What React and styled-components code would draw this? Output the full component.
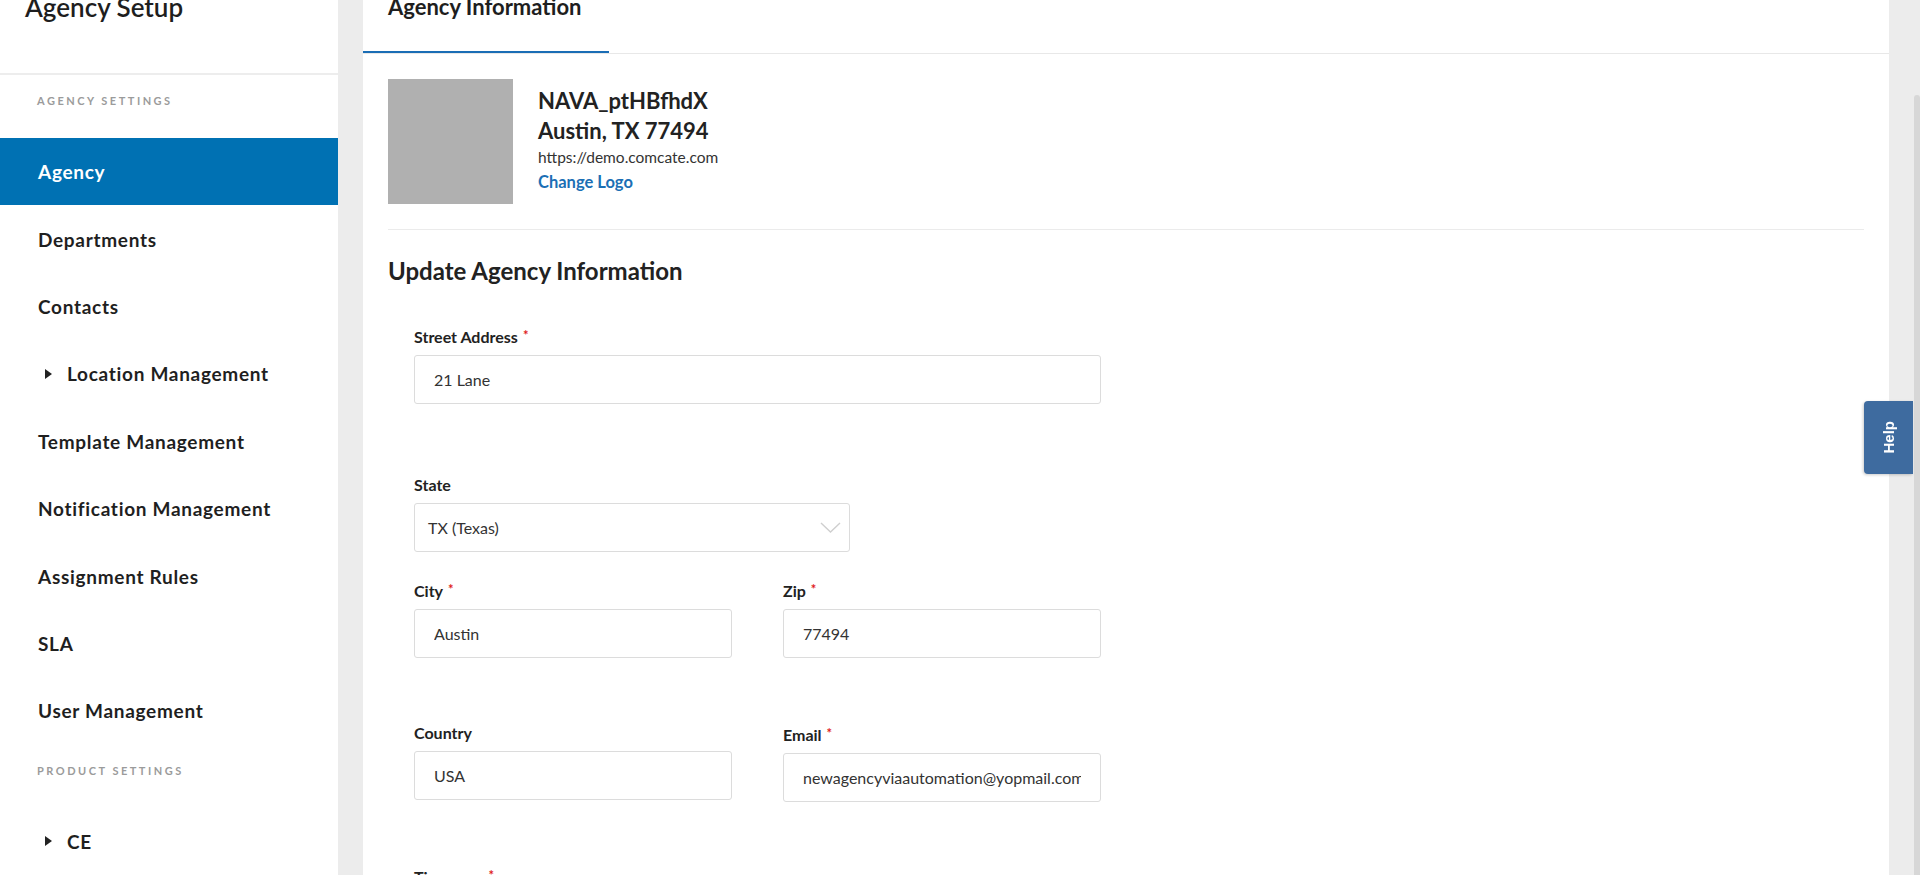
import styled, { createGlobalStyle } from 'styled-components';

const GlobalStyle = createGlobalStyle`
  html, body {
    margin: 0;
    padding: 0;
  }

  body {
    font-family: Lato, 'Liberation Sans', sans-serif;
    background: #ececec;
    color: #222;
    overflow: hidden;
  }

  * {
    box-sizing: border-box;
  }
`;

const Page = styled.div`
  display: flex;
  height: 875px;
  overflow: hidden;
  background: #ececec;
`;

const Sidebar = styled.aside`
  width: 338px;
  flex-shrink: 0;
  background: #fff;
  display: flex;
  flex-direction: column;
`;

const SidebarTitle = styled.h1`
  margin: 0;
  height: 75px;
  padding-left: 25px;
  border-bottom: 2px solid #ededed;
  font-size: 26px;
  font-weight: 600;
  line-height: 31px;
  color: #1e1e1e;

  span {
    display: block;
    margin-top: -8px;
  }
`;

const SectionLabel = styled.div`
  height: 63px;
  padding: 18px 0 0 37px;
  font-size: 11px;
  font-weight: 700;
  line-height: 16px;
  letter-spacing: 2.5px;
  color: #9b9b9b;
  text-transform: uppercase;
`;

const NavItem = styled.a`
  display: flex;
  align-items: center;
  gap: 15px;
  height: 67.4px;
  padding-left: ${p => (p.$caret ? '45px' : '38px')};
  font-size: 19px;
  font-weight: 700;
  letter-spacing: 0.7px;
  color: ${p => (p.$active ? '#fff' : '#1f1f1f')};
  background: ${p => (p.$active ? '#0071b3' : 'transparent')};
  text-decoration: none;
  cursor: pointer;
`;

const Content = styled.main`
  flex: 1;
  display: flex;
  padding: 0 25px;
  min-width: 0;
`;

const Panel = styled.section`
  flex: 1;
  background: #fff;
  min-width: 0;
`;

const TabBar = styled.div`
  display: flex;
  height: 54px;
  border-bottom: 1px solid #e8e8e8;
`;

const Tab = styled.div`
  width: 246px;
  height: 53px;
  padding-left: 25px;
  border-bottom: 2px solid #1a6db5;
  font-size: 22px;
  font-weight: 700;
  line-height: 24px;
  color: #1e1e1e;

  span {
    display: block;
    margin-top: -5px;
  }
`;

const PanelBody = styled.div`
  padding: 25px 25px 0;
`;

const ProfileRow = styled.div`
  display: flex;
  gap: 25px;
  padding-bottom: 25px;
  border-bottom: 1px solid #ebebeb;
`;

const LogoBox = styled.div`
  width: 125px;
  height: 125px;
  background: #b0b0b0;
  flex-shrink: 0;
`;

const ProfileInfo = styled.div`
  padding-top: 7px;
  display: flex;
  flex-direction: column;
`;

const AgencyLine = styled.div`
  font-size: 22px;
  font-weight: 700;
  line-height: 30px;
  color: #222;
`;

const UrlLine = styled.div`
  font-size: 15.5px;
  line-height: 22px;
  color: #333;
`;

const ChangeLogo = styled.a`
  margin-top: 3px;
  font-size: 16.5px;
  font-weight: 700;
  line-height: 22px;
  color: #1b6fb5;
  text-decoration: none;
  cursor: pointer;
`;

const SectionTitle = styled.h2`
  margin: 26px 0 0;
  font-size: 24px;
  font-weight: 700;
  line-height: 30px;
  color: #222;
`;

const Form = styled.form`
  margin-top: 39px;
  padding-left: 26px;
  width: 713px;
`;

const Row = styled.div`
  display: grid;
  grid-template-columns: 318px 318px;
  column-gap: 51px;
  margin-bottom: ${p => p.$space || 0}px;
`;

const Field = styled.div`
  width: ${p => p.$width || '100%'};
  margin-bottom: ${p => p.$space || 0}px;
`;

const Label = styled.label`
  display: block;
  margin-bottom: 8px;
  font-size: 16px;
  font-weight: 700;
  line-height: 20px;
  color: #222;
`;

const Required = styled.span`
  margin-left: 5px;
  color: #e01b1b;
  font-size: 13px;
  vertical-align: 3px;
`;

const TextInput = styled.input`
  display: block;
  width: 100%;
  height: 49px;
  padding: 0 19px;
  border: 1px solid #dcdcdc;
  border-radius: 3px;
  font-family: Lato, 'Liberation Sans', sans-serif;
  font-size: 16px;
  color: #333;
  background: #fff;
  outline: none;
`;

const SelectBox = styled.div`
  display: flex;
  align-items: center;
  justify-content: space-between;
  height: 49px;
  padding: 0 8px 0 13px;
  border: 1px solid #dcdcdc;
  border-radius: 3px;
  font-size: 16px;
  color: #333;
`;

const HelpTab = styled.button`
  position: fixed;
  top: 401px;
  right: 7px;
  width: 49px;
  height: 73px;
  border: none;
  border-radius: 4px 0 0 4px;
  background: #3e6b9f;
  box-shadow: -1px 1px 3px rgba(0, 0, 0, 0.2);
  color: #fff;
  font-family: 'Liberation Sans', Arial, sans-serif;
  font-size: 15px;
  font-weight: 700;
  display: flex;
  align-items: center;
  justify-content: center;
  padding: 0;

  span {
    writing-mode: vertical-rl;
    transform: rotate(180deg);
  }
`;

const ScrollTrack = styled.div`
  width: 6px;
  flex-shrink: 0;
  display: flex;
  flex-direction: column;
  padding-top: 95px;
  background: #ececec;
`;

const ScrollThumb = styled.div`
  flex: 1;
  border-radius: 3px 3px 0 0;
  background: #d7d7d7;
`;

const Caret = () => (
  <svg width='7' height='10' viewBox='0 0 7 10'>
    <path d='M0 0 L7 5 L0 10 Z' fill='#222' />
  </svg>
);

const Chevron = () => (
  <svg width='21' height='11' viewBox='0 0 21 11'>
    <polyline points='1,1 10.5,10 20,1' fill='none' stroke='#cfcfcf' strokeWidth='1.4' />
  </svg>
);

const agencyNav = [
  { label: 'Agency', active: true },
  { label: 'Departments' },
  { label: 'Contacts' },
  { label: 'Location Management', caret: true },
  { label: 'Template Management' },
  { label: 'Notification Management' },
  { label: 'Assignment Rules' },
  { label: 'SLA' },
  { label: 'User Management' },
];

const productNav = [{ label: 'CE', caret: true }];

const NavList = ({ items }) =>
  items.map(item => (
    <NavItem key={item.label} $active={item.active} $caret={item.caret}>
      {item.caret && <Caret />}
      {item.label}
    </NavItem>
  ));

const App = () => (
  <>
    <GlobalStyle />
    <Page>
      <Sidebar>
        <SidebarTitle>
          <span>Agency Setup</span>
        </SidebarTitle>
        <SectionLabel>Agency Settings</SectionLabel>
        <NavList items={agencyNav} />
        <SectionLabel>Product Settings</SectionLabel>
        <NavList items={productNav} />
      </Sidebar>

      <Content>
        <Panel>
          <TabBar>
            <Tab>
              <span>Agency Information</span>
            </Tab>
          </TabBar>

          <PanelBody>
            <ProfileRow>
              <LogoBox />
              <ProfileInfo>
                <AgencyLine>NAVA_ptHBfhdX</AgencyLine>
                <AgencyLine>Austin, TX 77494</AgencyLine>
                <UrlLine>https://demo.comcate.com</UrlLine>
                <ChangeLogo>Change Logo</ChangeLogo>
              </ProfileInfo>
            </ProfileRow>

            <SectionTitle>Update Agency Information</SectionTitle>

            <Form onSubmit={e => e.preventDefault()}>
              <Field $space={71}>
                <Label>
                  Street Address<Required>*</Required>
                </Label>
                <TextInput defaultValue='21 Lane' />
              </Field>

              <Field $width='436px' $space={27}>
                <Label>State</Label>
                <SelectBox>
                  <span>TX (Texas)</span>
                  <Chevron />
                </SelectBox>
              </Field>

              <Row $space={65}>
                <Field>
                  <Label>
                    City<Required>*</Required>
                  </Label>
                  <TextInput defaultValue='Austin' />
                </Field>
                <Field>
                  <Label>
                    Zip<Required>*</Required>
                  </Label>
                  <TextInput defaultValue='77494' />
                </Field>
              </Row>

              <Row $space={63}>
                <Field>
                  <Label>Country</Label>
                  <TextInput defaultValue='USA' />
                </Field>
                <Field>
                  <Label>
                    Email<Required>*</Required>
                  </Label>
                  <TextInput defaultValue='newagencyviaautomation@yopmail.com' />
                </Field>
              </Row>

              <Field>
                <Label>
                  Timezone<Required>*</Required>
                </Label>
              </Field>
            </Form>
          </PanelBody>
        </Panel>
      </Content>

      <ScrollTrack>
        <ScrollThumb />
      </ScrollTrack>

      <HelpTab type='button'>
        <span>Help</span>
      </HelpTab>
    </Page>
  </>
);

export default App;
